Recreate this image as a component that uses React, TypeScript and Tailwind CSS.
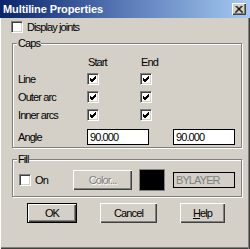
import React from "react";

function Check({ checked = false }: { checked?: boolean }) {
  return (
    <div className="w-[12px] h-[12px] bg-white border border-t-[#808080] border-l-[#808080] border-b-white border-r-white shadow-[inset_1px_1px_0_#404040,inset_-1px_-1px_0_#d4d0c8] flex items-center justify-center shrink-0">
      {checked && (
        <svg width="8" height="8" viewBox="0 0 8 8">
          <path d="M1 3 L3 5 L7 1 M1 4 L3 6 L7 2 M1 5 L3 7 L7 3" stroke="#000" strokeWidth="1" fill="none" />
        </svg>
      )}
    </div>
  );
}

function Btn({ children, w, def = false }: { children: React.ReactNode; w: string; def?: boolean }) {
  return (
    <div
      className={
        "h-[20px] flex items-center justify-center bg-[#d4d0c8] " +
        w +
        (def
          ? " border border-black shadow-[inset_1px_1px_0_#fff,inset_-1px_-1px_0_#404040,inset_-2px_-2px_0_#808080]"
          : " shadow-[inset_1px_1px_0_#fff,inset_-1px_-1px_0_#404040,inset_-2px_-2px_0_#808080]")
      }
    >
      {children}
    </div>
  );
}

export default function App() {
  return (
    <div className="w-[250px] h-[249px] bg-[#d4d0c8] flex flex-col overflow-hidden font-['Liberation_Sans',Arial,sans-serif] text-[11px] text-black leading-[13px]">
      <div className="h-[18px] shrink-0 bg-linear-to-r from-[#0a246a] via-[#5a7ab8] to-[#a6caf0] flex items-center justify-between pl-[3px] pr-[4px]">
        <span className="text-white font-bold text-[11px] tracking-[-0.1px]">Multiline Properties</span>
        <div className="w-[14px] h-[12px] bg-[#d4d0c8] shadow-[inset_1px_1px_0_#fff,inset_-1px_-1px_0_#404040,inset_-2px_-2px_0_#808080] flex items-center justify-center">
          <svg width="8" height="7" viewBox="0 0 8 7">
            <path d="M0.5 0 L7.5 7 M7.5 0 L0.5 7 M1.5 0 L8 6.5 M6.5 0 L0 6.5" stroke="#000" strokeWidth="1" fill="none" />
          </svg>
        </div>
      </div>
      <div className="flex-1 flex flex-col shadow-[inset_1px_0_0_#fff,inset_-1px_0_0_#404040,inset_-2px_0_0_#808080,inset_0_-1px_0_#404040,inset_0_-2px_0_#808080] pl-[11px] tracking-[-0.9px]">
        <div className="mt-[3px] flex items-center h-[12px]">
          <Check />
          <span className="ml-[4px]">Display joints</span>
        </div>

        <div className="relative mt-[10px] ml-[1px] w-[230px] h-[105px] border border-[#808080] shadow-[inset_1px_1px_0_#fff,1px_1px_0_#fff] pl-[5px] pt-[12px] flex flex-col">
          <span className="absolute left-[4px] top-[-7px] bg-[#d4d0c8] px-[1px]">Caps</span>
          <div className="flex h-[14px] items-start">
            <span className="w-[69px]" />
            <span className="w-[53px] pl-[1px]">Start</span>
            <span className="pl-[1px]">End</span>
          </div>
          {[
            ["Line", true, true],
            ["Outer arc", true, true],
            ["Inner arcs", true, true],
          ].map(([label, a, b]) => (
            <div key={label as string} className="flex h-[18px] items-center">
              <span className="w-[69px]">{label as string}</span>
              <span className="w-[53px]">
                <Check checked={a as boolean} />
              </span>
              <Check checked={b as boolean} />
            </div>
          ))}
          <div className="flex items-center mt-[5px] h-[16px]">
            <span className="w-[69px]">Angle</span>
            <div className="w-[62px] h-[16px] bg-white border border-black flex items-center pl-[2px]">90.000</div>
            <div className="ml-[24px] w-[62px] h-[16px] bg-white border border-black flex items-center pl-[2px]">90.000</div>
          </div>
        </div>

        <div className="relative mt-[11px] ml-[1px] w-[230px] h-[38px] border border-[#808080] shadow-[inset_1px_1px_0_#fff,1px_1px_0_#fff] pl-[6px] flex items-center pt-[4px]">
          <span className="absolute left-[4px] top-[-7px] bg-[#d4d0c8] px-[1px]">Fill</span>
          <div className="w-[54px] flex items-center">
            <Check />
            <span className="ml-[4px]">On</span>
          </div>
          <div className="w-[59px] h-[20px] flex items-center justify-center text-[#808080] [text-shadow:1px_1px_0_#fff] shadow-[inset_1px_1px_0_#fff,inset_-1px_-1px_0_#404040,inset_-2px_-2px_0_#808080]">
            Color...
          </div>
          <div className="ml-[7px] w-[26px] h-[22px] bg-black border border-[#808080]" />
          <div className="ml-[8px] w-[62px] h-[16px] border border-black flex items-center pl-[2px] text-[#808080]">
            BYLAYER
          </div>
        </div>

        <div className="mt-[6px] flex items-center pl-[16px]">
          <Btn w="w-[50px]" def>
            OK
          </Btn>
          <div className="ml-[23px]">
            <Btn w="w-[57px]">Cancel</Btn>
          </div>
          <div className="ml-[23px]">
            <Btn w="w-[45px]">
              <span>
                <span className="underline">H</span>elp
              </span>
            </Btn>
          </div>
        </div>
      </div>
    </div>
  );
}
